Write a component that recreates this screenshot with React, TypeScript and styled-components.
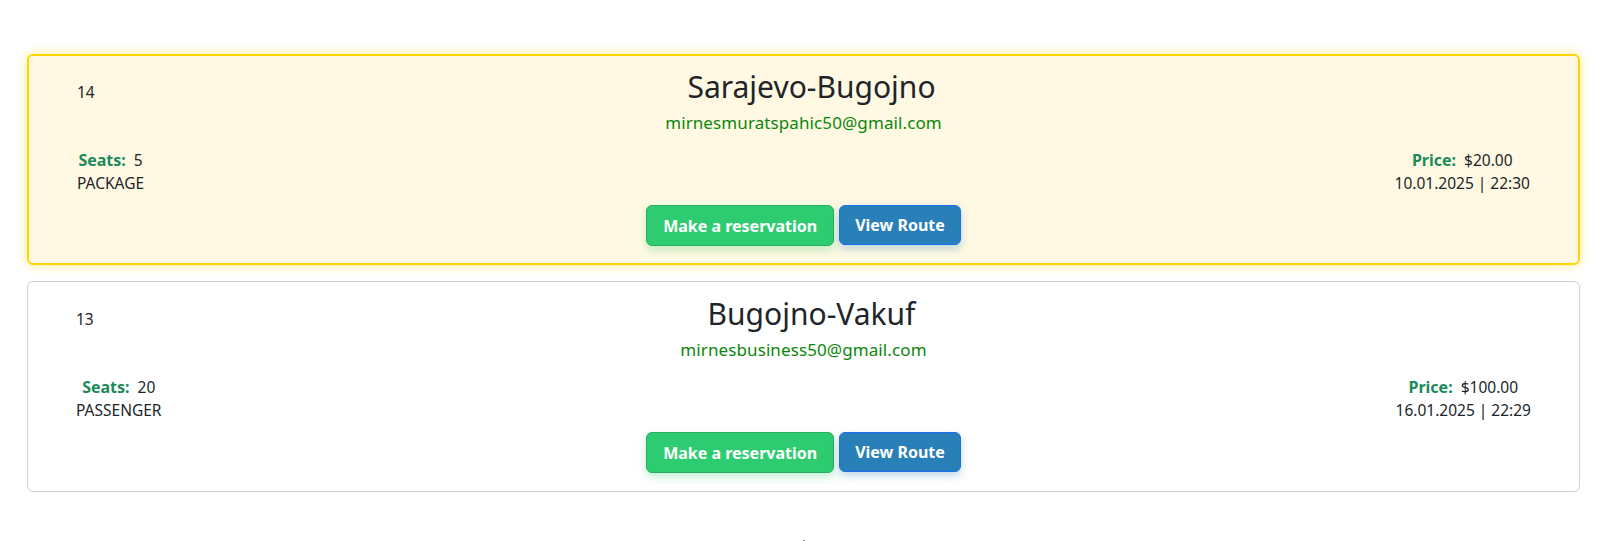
import React from "react";
import styled, { createGlobalStyle } from "styled-components";

const GlobalStyle = createGlobalStyle`
body {
  margin: 0;
  background: #ffffff;
  font-family: "Noto Sans", "Open Sans", sans-serif;
  color: #212529;
}
* { box-sizing: border-box; }
`;

type CardProps = {
  $highlight: boolean;
};

const Page = styled.div`
display: flex;
flex-direction: column;
gap: 16px;
padding: 54px 26px 0 27px;
`;

const RideCard = styled.div<CardProps>`
display: flex;
flex-direction: column;
padding: ${props => props.$highlight ? "13px 48px 17px" : "14px 48px 18px"};
border: ${props => props.$highlight ? "2px solid #ffd700" : "1px solid #d0d0d0"};
border-radius: 6px;
background-color: ${props => props.$highlight ? "#fff9e3" : "#ffffff"};
box-shadow: ${props => props.$highlight ? "0 0 12px rgba(255, 215, 0, 0.45)" : "none"};
`;

const HeaderRow = styled.div`
display: grid;
grid-template-columns: 1fr auto 1fr;
align-items: start;
`;

const RideId = styled.span`
font-size: 15.5px;
line-height: 24px;
padding-top: 11px;
`;

const TitleBlock = styled.div`
display: flex;
flex-direction: column;
align-items: center;
`;

const RouteTitle = styled.h2`
margin: 0;
padding-left: 16px;
font-size: 30px;
font-weight: 400;
line-height: 36px;
color: #212529;
`;

const Email = styled.span`
margin-top: 6px;
font-size: 17px;
letter-spacing: 0.1px;
line-height: 24px;
color: #0a870a;
`;

const DetailRow = styled.div`
display: flex;
justify-content: space-between;
margin-top: 14px;
`;

const DetailCol = styled.div`
display: flex;
flex-direction: column;
align-items: center;
font-size: 15.5px;
line-height: 23px;
`;

const Label = styled.span`
font-weight: 700;
font-size: 16px;
color: #1b8a5a;
margin-right: 8px;
`;

const ButtonRow = styled.div`
display: flex;
justify-content: center;
gap: 5px;
margin-top: 10px;
`;

type ButtonProps = {
  $variant: "green" | "blue";
};

const ActionButton = styled.button<ButtonProps>`
height: ${props => props.$variant === "green" ? "41px" : "40px"};
padding: 0 ${props => props.$variant === "green" ? "16px" : "15px"};
border-radius: 6px;
border: 1px solid ${props => props.$variant === "green" ? "#27ae60" : "#1a6ff0"};
background-color: ${props => props.$variant === "green" ? "#2ecc71" : "#2980b9"};
color: #ffffff;
font-family: "Noto Sans", sans-serif;
font-size: 16px;
font-weight: 700;
cursor: pointer;
box-shadow: ${props => props.$variant === "green"
    ? "0 4px 8px rgba(46, 204, 113, 0.3)"
    : "0 4px 8px rgba(41, 128, 185, 0.3)"};
`;

const Footer = styled.div`
display: flex;
justify-content: center;
margin-top: 32px;
`;

const Dot = styled.span`
width: 2px;
height: 2px;
background: #8a8a8a;
`;

type Ride = {
  id: number;
  route: string;
  email: string;
  seats: number;
  kind: string;
  price: string;
  date: string;
};

const rides: Ride[] = [
  { id: 14, route: "Sarajevo-Bugojno", email: "mirnesmuratspahic50@gmail.com", seats: 5, kind: "PACKAGE", price: "$20.00", date: "10.01.2025 | 22:30" },
  { id: 13, route: "Bugojno-Vakuf", email: "mirnesbusiness50@gmail.com", seats: 20, kind: "PASSENGER", price: "$100.00", date: "16.01.2025 | 22:29" },
];

export default function App() {
  return (
    <>
      <GlobalStyle />
      <Page>
        {rides.map((r, i) => (
          <RideCard key={r.id} $highlight={i === 0}>
            <HeaderRow>
              <RideId>{r.id}</RideId>
              <TitleBlock>
                <RouteTitle>{r.route}</RouteTitle>
                <Email>{r.email}</Email>
              </TitleBlock>
              <div />
            </HeaderRow>
            <DetailRow>
              <DetailCol>
                <span><Label>Seats:</Label>{r.seats}</span>
                <span>{r.kind}</span>
              </DetailCol>
              <DetailCol>
                <span><Label>Price:</Label>{r.price}</span>
                <span>{r.date}</span>
              </DetailCol>
            </DetailRow>
            <ButtonRow>
              <ActionButton $variant="green">Make a reservation</ActionButton>
              <ActionButton $variant="blue">View Route</ActionButton>
            </ButtonRow>
          </RideCard>
        ))}
        <Footer><Dot /></Footer>
      </Page>
    </>
  );
}
